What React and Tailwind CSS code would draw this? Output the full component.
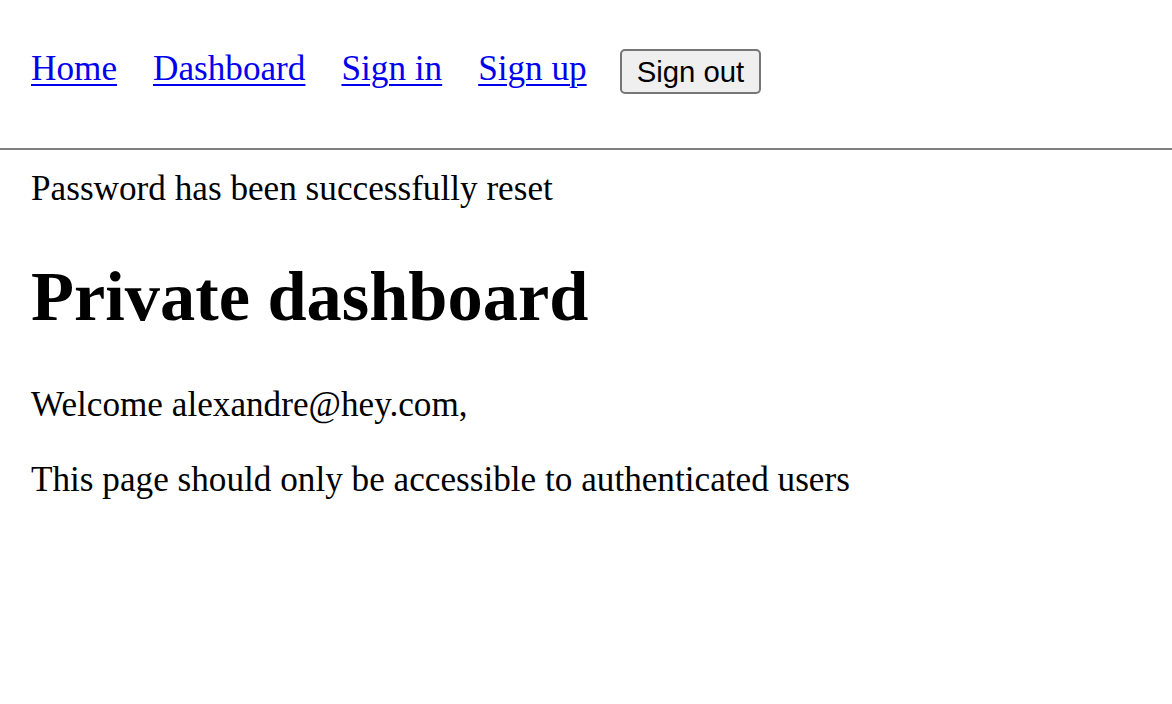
import React from "react";

function NavLink({ children }) {
  return (
    <a href="#" className="text-[#0000ee] underline decoration-2 underline-offset-[4px]">
      {children}
    </a>
  );
}

export default function App() {
  return (
    <div className="min-h-[704px] bg-white text-black font-['Liberation_Serif','Times_New_Roman',serif] text-[35.2px] leading-[40px]">
      {/* Top nav */}
      <nav className="h-[148px] pl-[31px] pt-[49px] flex items-start gap-[36px]">
        <NavLink>Home</NavLink>
        <NavLink>Dashboard</NavLink>
        <NavLink>Sign in</NavLink>
        <NavLink>Sign up</NavLink>
        <button className="-ml-[3px] h-[45px] px-[15px] border-2 border-[#767676] rounded-[5px] bg-[#efefef] font-['Liberation_Sans',Arial,sans-serif] text-[29.3px] leading-[36px] text-black">
          Sign out
        </button>
      </nav>
      <hr className="border-0 border-t-2 border-[#7f7f7f]" />

      <main className="pl-[31px]">
        <p className="mt-[19px]">Password has been successfully reset</p>
        <h1 className="mt-[47px] text-[70.4px] leading-[80px] font-bold">Private dashboard</h1>
        <p className="mt-[49px]">Welcome alexandre@hey.com,</p>
        <p className="mt-[35px]">This page should only be accessible to authenticated users</p>
      </main>
    </div>
  );
}
